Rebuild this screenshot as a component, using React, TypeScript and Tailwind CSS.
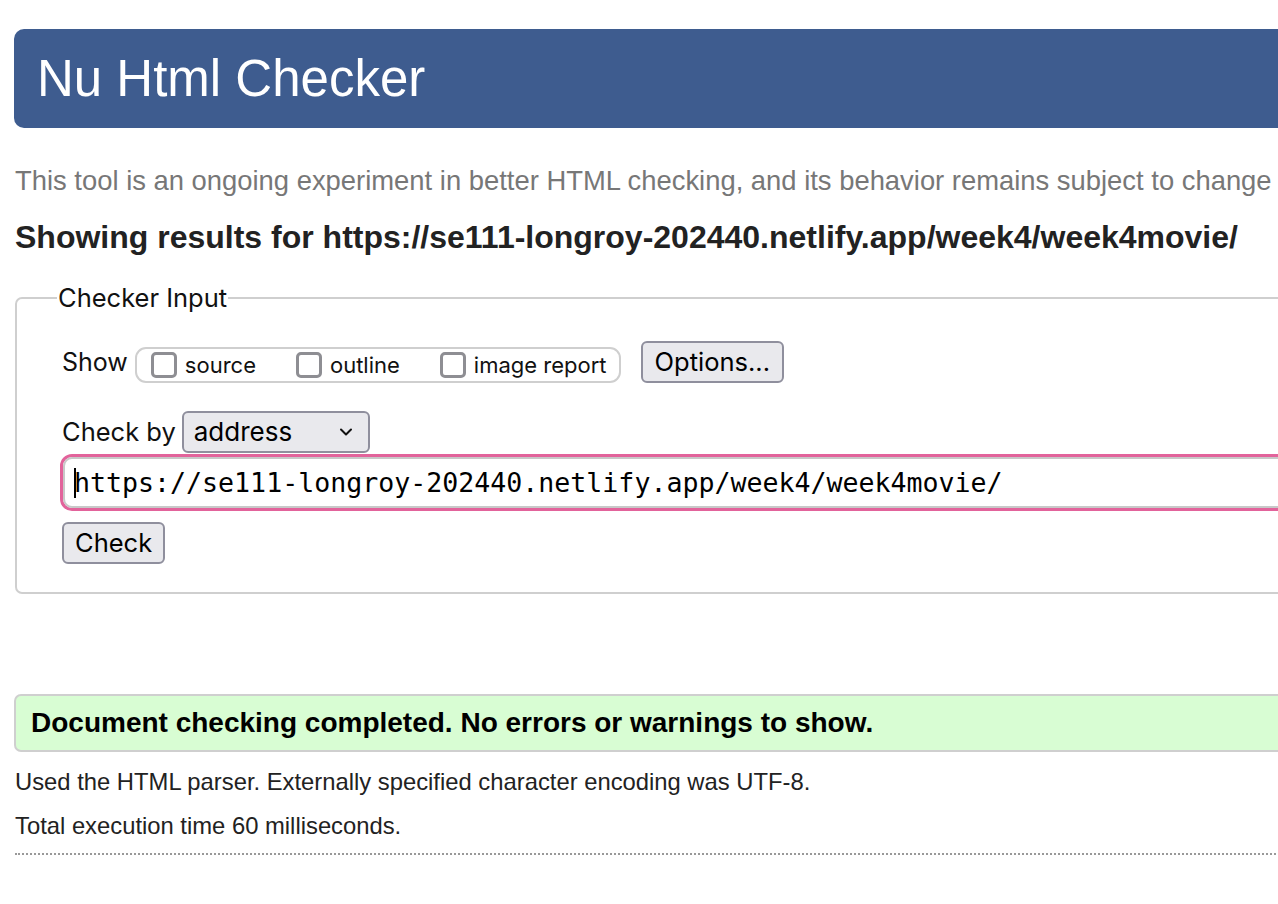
import React from "react";

function Box({ label }: { label: string }) {
  return (
    <span className="flex items-center gap-[8px]">
      <span className="w-[26px] h-[26px] rounded-[5px] border-[3px] border-[#8e8e93] bg-white" />
      <span className="text-[22px] leading-[28px] text-[#111] font-['Inter',sans-serif]">{label}</span>
    </span>
  );
}

export default function App() {
  return (
    <div className="w-[1278px] h-[904px] overflow-hidden bg-white">
      <div className="w-[1500px] pl-[14px] pt-[29px] font-['Liberation_Sans',Arial,sans-serif]">
        <header className="h-[99px] rounded-l-[10px] bg-[#3e5c8f] flex items-center pl-[23px]">
          <h1 className="text-white text-[51px] leading-[60px] font-normal">Nu Html Checker</h1>
        </header>

        <p className="mt-[37px] ml-[1px] text-[27.4px] leading-[32px] text-[#777] whitespace-nowrap">
          This tool is an ongoing experiment in better HTML checking, and its behavior remains subject to change
        </p>

        <h2 className="mt-[21px] ml-[1px] text-[32px] leading-[38px] font-bold text-[#222] whitespace-nowrap">
          Showing results for https://se111-longroy-202440.netlify.app/week4/week4movie/
        </h2>

        <fieldset className="mt-[27px] ml-[1px] border-2 border-[#cfcfcf] rounded-[7px] pl-[45px] pb-[28px] font-['Inter',sans-serif]">
          <legend className="ml-[-5px] px-[1px] text-[25.5px] leading-[30px] text-[#111]">Checker Input</legend>

          <div className="mt-[28px] flex items-center h-[42px]">
            <span className="text-[25px] leading-[30px] text-[#111]">Show</span>
            <div className="ml-[7px] h-[36px] self-end flex items-center gap-[40px] pl-[14px] pr-[12px] rounded-[11px] border-2 border-[#cfcfcf]">
              <Box label="source" />
              <Box label="outline" />
              <Box label="image report" />
            </div>
            <button className="ml-[20px] h-[42px] px-[12px] rounded-[6px] border-2 border-[#8f8f9d] bg-[#e9e9ed] text-[25.5px] leading-[30px] text-black">
              Options...
            </button>
          </div>

          <div className="mt-[28px] flex items-center h-[42px]">
            <span className="text-[25.5px] leading-[30px] text-[#111]">Check by</span>
            <div className="ml-[6px] w-[188px] h-[42px] rounded-[6px] border-2 border-[#8f8f9d] bg-[#e9e9ed] flex items-center justify-between pl-[10px] pr-[14px]">
              <span className="text-[26px] leading-[30px] text-black">address</span>
              <svg width="16" height="10" viewBox="0 0 16 10" fill="none">
                <path d="M3 2.5 L8 7.5 L13 2.5" stroke="#111" strokeWidth="2" strokeLinecap="round" strokeLinejoin="round" />
              </svg>
            </div>
          </div>

          <div className="mt-[1px] ml-[-2px] h-[57px] rounded-[12px] border-[3px] border-[#e2639b]">
            <div className="h-full rounded-[9px] border-2 border-[#c8c8c8] bg-white flex items-center pl-[9px]">
              <span className="w-[2px] h-[30px] bg-black" />
              <span className="ml-[-2px] text-[26.6px] leading-[32px] text-black font-['DejaVu_Sans_Mono',monospace] whitespace-nowrap">
                https://se111-longroy-202440.netlify.app/week4/week4movie/
              </span>
            </div>
          </div>

          <button className="mt-[11px] h-[42px] px-[11px] rounded-[6px] border-2 border-[#8f8f9d] bg-[#e9e9ed] text-[25.5px] leading-[30px] text-black">
            Check
          </button>
        </fieldset>

        <div className="mt-[100px] h-[58px] rounded-l-[7px] border-2 border-[#cfcfcf] bg-[#d8fdd3] flex items-center pl-[15px]">
          <p className="text-[28px] leading-[32px] font-bold text-black whitespace-nowrap">
            Document checking completed. No errors or warnings to show.
          </p>
        </div>

        <p className="mt-[16px] ml-[1px] text-[23.8px] leading-[28px] text-[#222] whitespace-nowrap">
          Used the HTML parser. Externally specified character encoding was UTF-8.
        </p>
        <p className="mt-[16px] ml-[1px] text-[23.8px] leading-[28px] text-[#222] whitespace-nowrap">
          Total execution time 60 milliseconds.
        </p>
        <div className="mt-[13px] ml-[1px] border-t-2 border-dotted border-[#999]" />
      </div>
    </div>
  );
}
